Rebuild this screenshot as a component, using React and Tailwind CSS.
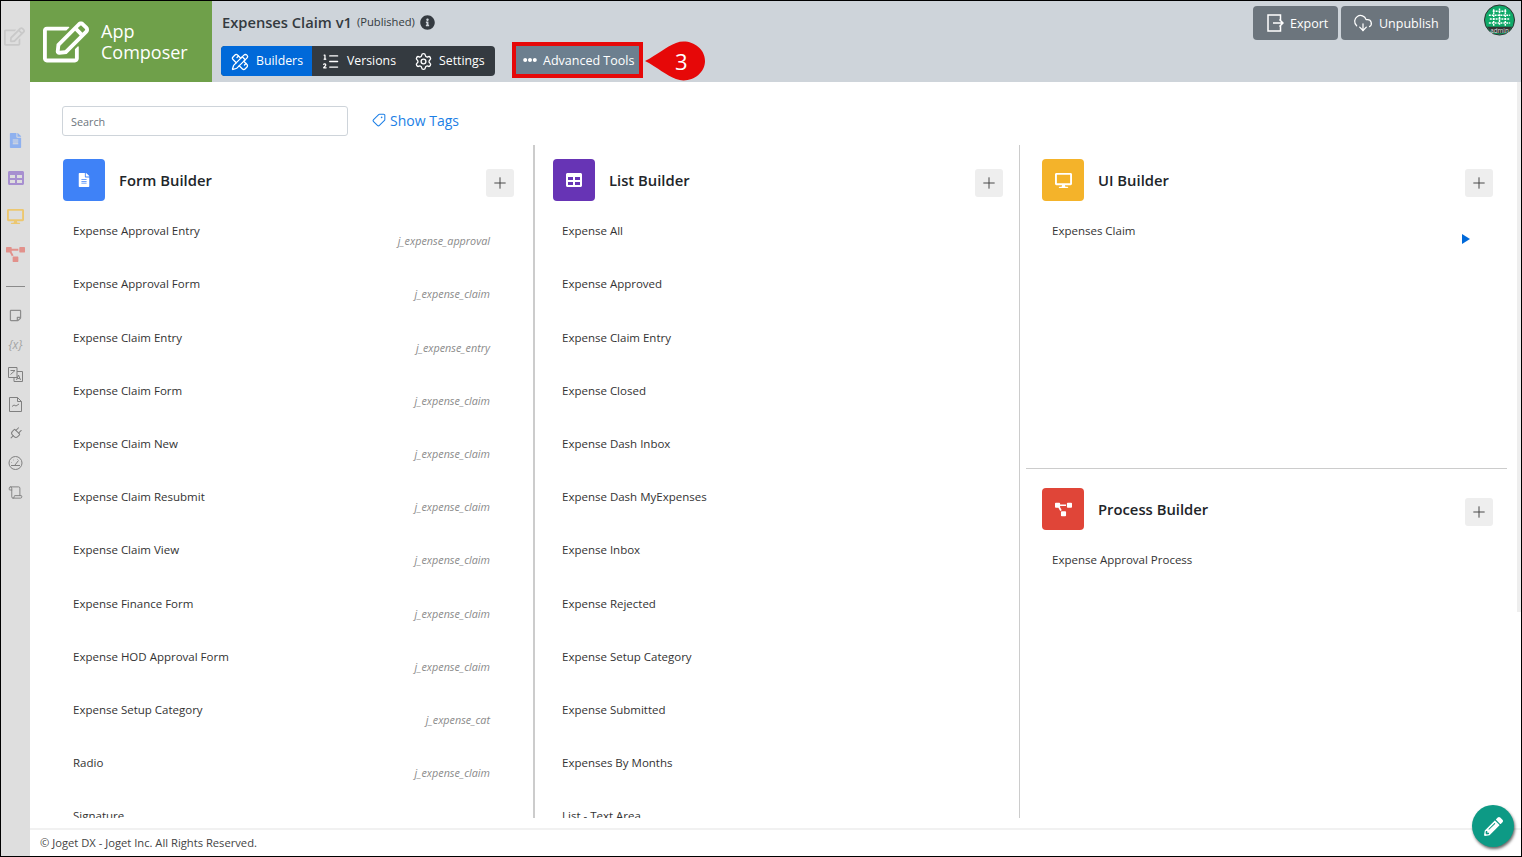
import React from "react";
import {
  FaRegEdit,
  FaFileAlt,
  FaTable,
  FaDesktop,
  FaProjectDiagram,
  FaRegStickyNote,
  FaEllipsisH,
  FaInfoCircle,
  FaPencilAlt,
} from "react-icons/fa";
import {
  PencilRuler,
  ListOrdered,
  Settings,
  CloudDownload,
  Plus,
  Tag,
  Plug,
  Scroll,
} from "lucide-react";

const formItems = [
  ["Expense Approval Entry", "j_expense_approval"],
  ["Expense Approval Form", "j_expense_claim"],
  ["Expense Claim Entry", "j_expense_entry"],
  ["Expense Claim Form", "j_expense_claim"],
  ["Expense Claim New", "j_expense_claim"],
  ["Expense Claim Resubmit", "j_expense_claim"],
  ["Expense Claim View", "j_expense_claim"],
  ["Expense Finance Form", "j_expense_claim"],
  ["Expense HOD Approval Form", "j_expense_claim"],
  ["Expense Setup Category", "j_expense_cat"],
  ["Radio", "j_expense_claim"],
  ["Signature", ""],
];

const listItems = [
  "Expense All",
  "Expense Approved",
  "Expense Claim Entry",
  "Expense Closed",
  "Expense Dash Inbox",
  "Expense Dash MyExpenses",
  "Expense Inbox",
  "Expense Rejected",
  "Expense Setup Category",
  "Expense Submitted",
  "Expenses By Months",
  "List - Text Area",
];

const BuilderHead = ({ color, icon, title }) => (
  <div className="flex h-[42px] items-center">
    <div className={`flex h-[42px] w-[42px] items-center justify-center rounded-[4px] text-white ${color}`}>
      {icon}
    </div>
    <div className="ml-[14px] text-[14.8px] font-semibold text-[#212529]">{title}</div>
    <button className="ml-auto mt-[5px] flex h-[28px] w-[28px] items-center justify-center rounded-[3px] bg-[#eeeeee] text-[#444]">
      <Plus size={18} strokeWidth={1.3} />
    </button>
  </div>
);

const Row = ({ name, tag }) => (
  <div className="h-[53.2px] pl-[10px] pt-[6px]">
    <div className="text-[11.5px] leading-[16px] text-[#333]">{name}</div>
    {tag && (
      <div className="-mt-[5px] pr-[24px] text-right text-[10.8px] italic leading-[13px] text-[#8a8a8a]">
        {tag}
      </div>
    )}
  </div>
);

const ExportIcon = () => (
  <svg width="17" height="18" viewBox="0 0 17 18" fill="none" stroke="currentColor" strokeWidth="1.5">
    <path d="M13.5 6V1H1v16h12.5v-5" />
    <path d="M6 9h10M12.5 5.5 16 9l-3.5 3.5" />
  </svg>
);

const TranslateIcon = () => (
  <svg width="15" height="15" viewBox="0 0 15 15" fill="none" stroke="currentColor" strokeWidth="1">
    <path d="M.5.5h8.5v10H.5z" />
    <path d="M2.5 7.5 7 3.5M2.5 3.5H7" />
    <path d="M9 4.5h5.5v10H6v-4" />
    <path d="M8.5 13l2-5 2 5M9.3 11.5h2.5" />
  </svg>
);

const ChartFileIcon = () => (
  <svg width="13" height="15" viewBox="0 0 13 15" fill="none" stroke="currentColor" strokeWidth="1">
    <path d="M.5.5h8l4 4v10H.5z" />
    <path d="M8.5.5v4h4M3 9.5l2-1.5 2 1 3-2" />
  </svg>
);

const GaugeIcon = () => (
  <svg width="15" height="14" viewBox="0 0 15 14" fill="none" stroke="currentColor" strokeWidth="1">
    <circle cx="7.5" cy="7" r="6.5" />
    <path d="M3 9.5h9M7 9l3.5-4.5M3.5 6.5h.5M5.5 4h.5M9 3.5h.5" />
  </svg>
);

const Avatar = () => (
  <svg width="31" height="32" viewBox="0 0 32 32" className="shrink-0">
    <circle cx="16" cy="16" r="15.5" fill="#0fa968" stroke="#2b2b2b" />
    <g stroke="#fff" strokeWidth="1.5" strokeDasharray="2 1">
      <path d="M9 7h14M5 11h22M6 15h20M5 19h22" />
      <path d="M10 5v17M16 4v18M22 5v17" />
    </g>
    <path d="M3 23h26a15.5 15.5 0 0 1-26 0z" fill="#333" />
    <text x="16" y="29" textAnchor="middle" fontSize="6.5" fill="#ddd" fontFamily="Open Sans, sans-serif">
      admin
    </text>
  </svg>
);

const App = () => {
  return (
    <div className="flex h-[857px] w-[1522px] overflow-hidden border border-black bg-white font-['Open_Sans','Noto_Sans',sans-serif]">
      {/* Side rail */}
      <aside className="flex w-[29px] shrink-0 flex-col items-center bg-[#dedede]">
        <div className="flex h-[70px] items-center pr-[2px] text-[#c9c9c9]">
          <FaRegEdit size={21} />
        </div>
        <div className="mt-[50px] flex h-[38px] items-center text-[#8fb1ef]">
          <FaFileAlt size={15} />
        </div>
        <div className="flex h-[38px] items-center text-[#a78fd0]">
          <FaTable size={16} />
        </div>
        <div className="flex h-[38px] items-center text-[#ecc770]">
          <FaDesktop size={17} />
        </div>
        <div className="flex h-[38px] items-center text-[#e2918b]">
          <FaProjectDiagram size={19} />
        </div>
        <div className="mt-[13px] h-px w-[19px] bg-[#8a8a8a]" />
        <div className="mt-[14px] flex h-[29.5px] items-center text-[#8c8c8c]">
          <FaRegStickyNote size={13} />
        </div>
        <div className="flex h-[29.5px] items-center text-[12px] italic text-[#a5a5a5]">{"{x}"}</div>
        <div className="flex h-[29.5px] items-center text-[#808080]">
          <TranslateIcon />
        </div>
        <div className="flex h-[29.5px] items-center text-[#808080]">
          <ChartFileIcon />
        </div>
        <div className="flex h-[29.5px] items-center text-[#808080]">
          <Plug size={15} strokeWidth={1.6} className="rotate-45" />
        </div>
        <div className="flex h-[29.5px] items-center text-[#808080]">
          <GaugeIcon />
        </div>
        <div className="flex h-[29.5px] items-center text-[#808080]">
          <Scroll size={15} strokeWidth={1.5} />
        </div>
      </aside>

      <div className="relative flex min-w-0 flex-1 flex-col">
        {/* Header */}
        <header className="flex h-[81px] shrink-0 bg-[#ced4da]">
          <div className="flex w-[182px] shrink-0 items-center bg-[#6fa04a] pl-[13px] text-white">
            <FaRegEdit size={46} />
            <div className="ml-[12px] text-[18px] leading-[21px]">
              <div>App</div>
              <div>Composer</div>
            </div>
          </div>

          <div className="ml-[10px] flex flex-col">
            <div className="mt-[12px] flex h-[18px] items-center text-[#343a40]">
              <span className="text-[14.7px] font-semibold">Expenses Claim v1</span>
              <span className="ml-[5px] text-[11.2px]">(Published)</span>
              <FaInfoCircle size={15} className="ml-[5px]" />
            </div>
            <div className="-ml-[1px] mt-[10px] flex items-center">
              <nav className="flex h-[30px] overflow-hidden rounded-[4px] bg-[#343a40] text-[12.3px] text-white">
                <a className="flex w-[91px] items-center gap-[7px] bg-[#0069d9] pl-[10px] pt-[1px]">
                  <PencilRuler size={18} strokeWidth={1.7} />
                  Builders
                </a>
                <a className="flex w-[92px] items-center gap-[7px] pl-[9px] pt-[1px]">
                  <ListOrdered size={19} strokeWidth={1.6} />
                  Versions
                </a>
                <a className="flex w-[91px] items-center gap-[6px] pl-[10px] pt-[1px]">
                  <Settings size={19} strokeWidth={1.7} />
                  Settings
                </a>
              </nav>
              <div className="mb-[2px] ml-[17px] flex h-[36px] w-[131px] items-center gap-[6px] border-[4px] border-[#e60808] bg-[#6c7f8f] pl-[7px] text-[12.5px] text-white">
                <FaEllipsisH size={14} />
                <span className="mt-[2px]">Advanced Tools</span>
              </div>
              {/* Step callout */}
              <div className="relative ml-[2px] h-[40px] w-[60px]">
                <svg width="60" height="40" viewBox="0 0 60 40" className="absolute inset-0">
                  <path d="M0 20 C12 14 22 5 31 2 C44 -3 60 6 60 20 C60 34 44 43 31 38 C22 35 12 26 0 20Z" fill="#e60808" />
                </svg>
                <span className="absolute left-[30px] top-[3px] text-[22px] leading-[34px] text-white">3</span>
              </div>
            </div>
          </div>

          <div className="ml-auto flex h-[34px] items-start pt-0">
            <button className="mt-[5px] flex h-[34px] w-[85px] items-center gap-[6px] rounded-[4px] bg-[#6c757d] pl-[14px] text-[12.5px] text-white">
              <ExportIcon />
              <span className="mt-[3px]">Export</span>
            </button>
            <button className="ml-[3px] mt-[5px] flex h-[34px] w-[108px] items-center gap-[6px] rounded-[4px] bg-[#6c757d] pl-[12px] text-[12.5px] text-white">
              <CloudDownload size={20} strokeWidth={1.5} />
              <span className="mt-[3px]">Unpublish</span>
            </button>
            <div className="ml-[35px] mr-[6px] mt-[3px]">
              <Avatar />
            </div>
          </div>
        </header>

        {/* Body */}
        <main className="flex min-h-0 flex-1">
          <div className="flex min-w-0 flex-1 flex-col">
            <div className="flex h-[63px] shrink-0 items-start pl-[32px] pt-[24px]">
              <input
                placeholder="Search"
                className="h-[30px] w-[286px] rounded-[3px] border border-[#ced4da] px-[8px] text-[10.8px] placeholder:text-[#6c757d]"
              />
              <a className="-mt-[1px] ml-[24px] flex h-[30px] items-center gap-[4px] text-[14px] text-[#1c7fe6]">
                <Tag size={14} strokeWidth={1.8} className="rotate-90" />
                Show Tags
              </a>
            </div>

            <div className="flex h-[673px] shrink-0">
              <section className="w-[505px] shrink-0 overflow-hidden border-r-2 border-[#cccccc] pl-[33px] pr-[19px] pt-[14px]">
                <BuilderHead color="bg-[#3f82f7]" icon={<FaFileAlt size={14} />} title="Form Builder" />
                <div className="mt-[16.3px]">
                  {formItems.map(([name, tag]) => (
                    <Row key={name} name={name} tag={tag} />
                  ))}
                </div>
              </section>

              <section className="w-[485px] shrink-0 overflow-hidden border-r border-[#cccccc] pl-[18px] pr-[16px] pt-[14px]">
                <BuilderHead color="bg-[#6734b5]" icon={<FaTable size={16} />} title="List Builder" />
                <div className="-ml-[1px] mt-[16.3px]">
                  {listItems.map((name) => (
                    <Row key={name} name={name} />
                  ))}
                </div>
              </section>

              <section className="flex min-w-0 flex-1 flex-col">
                <div className="ml-[6px] mr-[10px] h-[324px] shrink-0 border-b border-[#cccccc] pl-[16px] pr-[14px] pt-[14px]">
                  <BuilderHead color="bg-[#f4b32a]" icon={<FaDesktop size={17} />} title="UI Builder" />
                  <div className="relative mt-[16.3px]">
                    <Row name="Expenses Claim" />
                    <svg width="8" height="10" viewBox="0 0 8 10" className="absolute right-[23px] top-[17px] text-[#0069d9]">
                      <path d="M0 0l8 5-8 5z" fill="currentColor" />
                    </svg>
                  </div>
                </div>
                <div className="ml-[6px] pl-[16px] pr-[24px] pt-[19px]">
                  <BuilderHead color="bg-[#e04538]" icon={<FaProjectDiagram size={17} />} title="Process Builder" />
                  <div className="mt-[16px]">
                    <Row name="Expense Approval Process" />
                  </div>
                </div>
              </section>
            </div>
          </div>
          <div className="h-[530px] w-[4px] shrink-0 bg-[#eeeeee]" />
        </main>

        {/* Footer */}
        <footer className="flex h-[28px] shrink-0 items-center border-t-2 border-[#f1f1f1] pl-[10px] pt-[1px] text-[11.2px] text-[#444]">
          © Joget DX - Joget Inc. All Rights Reserved.
        </footer>

        {/* Floating edit button */}
        <button className="absolute bottom-[9px] right-[7px] flex h-[42px] w-[42px] items-center justify-center rounded-full bg-[#0d9a85] text-white shadow-[1px_2px_3px_rgba(0,0,0,0.6)]">
          <FaPencilAlt size={19} />
        </button>
      </div>
    </div>
  );
};

export default App;
